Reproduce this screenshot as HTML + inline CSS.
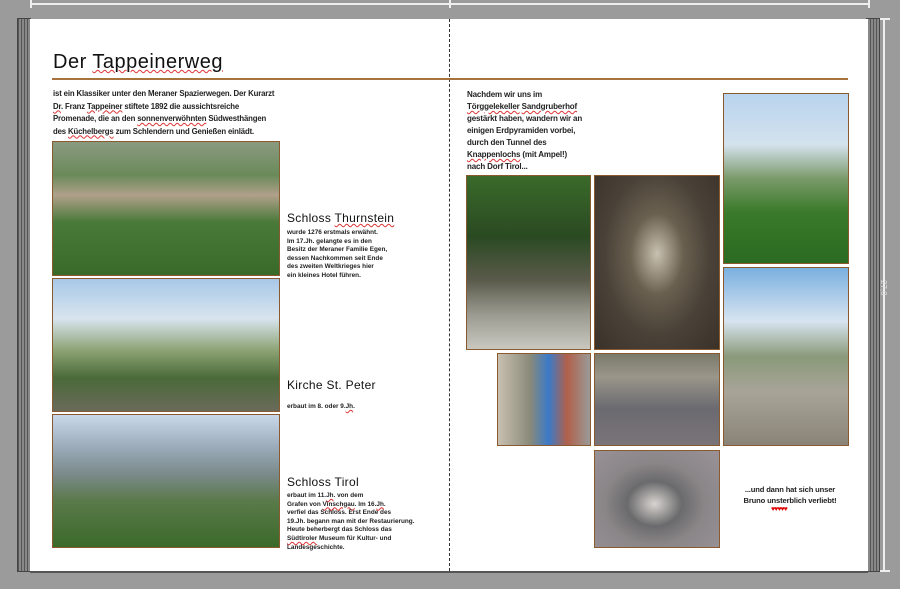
<!DOCTYPE html>
<html><head><meta charset="utf-8"><style>
*{margin:0;padding:0;box-sizing:border-box}
body{width:900px;height:589px;background:#9b9b9b;position:relative;overflow:hidden;font-family:"Liberation Sans",sans-serif}
.a{position:absolute}
.page{left:30px;top:19px;width:838px;height:552px;background:#fff}
.ph{position:absolute;border:1.5px solid #8a5a2e}
.t{position:absolute;font-size:7.8px;line-height:12.5px;color:#222;font-weight:bold;letter-spacing:-0.15px}
.s{position:absolute;font-size:6.4px;line-height:8.6px;color:#222;font-weight:bold}
.h{position:absolute;font-size:12px;color:#111;font-family:"Liberation Sans",sans-serif;font-weight:300;letter-spacing:0.3px}
u{text-decoration:underline wavy #d33;text-decoration-thickness:1px}
</style></head><body>
<div class="a" style="left:30px;top:3px;width:840px;height:2px;background:#eee"></div>
<div class="a" style="left:30px;top:0;width:2px;height:8px;background:#eee"></div>
<div class="a" style="left:449px;top:0;width:2px;height:8px;background:#eee"></div>
<div class="a" style="left:868px;top:0;width:2px;height:8px;background:#eee"></div>
<div class="a" style="left:883px;top:19px;width:2px;height:552px;background:#eee"></div>
<div class="a" style="left:878px;top:18px;width:12px;height:2px;background:#eee"></div>
<div class="a" style="left:878px;top:570px;width:12px;height:2px;background:#eee"></div>
<div class="a" style="left:888px;top:280px;font-size:8px;color:#ddd;transform:rotate(90deg);transform-origin:0 0">27,0 cm</div>
<div class="a" style="left:17px;top:18px;width:14px;height:554px;background:repeating-linear-gradient(90deg,#555 0 1px,#888 1px 3px);border:1px solid #444"></div>
<div class="a" style="left:866px;top:18px;width:14px;height:554px;background:repeating-linear-gradient(90deg,#555 0 1px,#888 1px 3px);border:1px solid #444"></div>
<div class="a page"></div>
<div class="a" style="left:449px;top:19px;height:552px;border-left:1px dashed #333"></div>
<div class="a" style="left:30px;top:571px;width:838px;height:2px;background:#555"></div>
<div class="a" style="left:53px;top:51px;font-size:20px;color:#111;letter-spacing:0.5px">Der <u>Tappeinerweg</u></div>
<div class="a" style="left:52px;top:78px;width:796px;height:2px;background:#a8723e"></div>
<div class="t" style="left:53px;top:88px;width:240px">ist ein Klassiker unter den Meraner Spazierwegen. Der Kurarzt<br><u>Dr</u>. Franz <u>Tappeiner</u> stiftete 1892 die aussichtsreiche<br>Promenade, die an den <u>sonnenverwöhnten</u> Südwesthängen<br>des <u>Küchelbergs</u> zum Schlendern und Genießen einlädt.</div>
<div class="ph" style="left:52px;top:141px;width:228px;height:135px;background:linear-gradient(180deg,#8a9a80 0%,#6a8a5a 25%,#b0a08a 40%,#4a7a3a 60%,#3a6a2a 100%)"></div>
<div class="ph" style="left:52px;top:278px;width:228px;height:134px;background:linear-gradient(180deg,#a8c8e8 0%,#d8e4ee 30%,#8aa070 55%,#4a6a3a 75%,#6a6a5a 100%)"></div>
<div class="ph" style="left:52px;top:414px;width:228px;height:134px;background:linear-gradient(180deg,#c8d8ea 0%,#9aaab8 25%,#7a8a8a 45%,#5a7a4a 65%,#3a6a2a 100%)"></div>
<div class="h" style="left:287px;top:211px;font-size:12px">Schloss <u>Thurnstein</u></div>
<div class="s" style="left:287px;top:229px;width:150px">wurde 1276 erstmals erwähnt.<br>Im 17.Jh. gelangte es in den<br>Besitz der Meraner Familie Egen,<br>dessen Nachkommen seit Ende<br>des zweiten Weltkrieges hier<br>ein kleines Hotel führen.</div>
<div class="h" style="left:287px;top:378px">Kirche St. Peter</div>
<div class="s" style="left:287px;top:403px">erbaut im 8. oder 9.<u>Jh</u>.</div>
<div class="h" style="left:287px;top:475px">Schloss Tirol</div>
<div class="s" style="left:287px;top:492px;width:150px">erbaut im 11.<u>Jh</u>. von dem<br>Grafen von <u>Vinschgau</u>. Im 16.<u>Jh</u>.<br>verfiel das Schloss. Erst Ende des<br>19.Jh. begann man mit der Restaurierung.<br>Heute beherbergt das Schloss das<br><u>Südtiroler</u> Museum für Kultur- und<br>Landesgeschichte.</div>
<div class="t" style="left:467px;top:89px;width:130px;line-height:12px;font-size:8px">Nachdem wir uns im<br><u>Törggelekeller</u> <u>Sandgruberhof</u><br>gestärkt haben, wandern wir an<br>einigen Erdpyramiden vorbei,<br>durch den Tunnel des<br><u>Knappenlochs</u> (mit Ampel!)<br>nach Dorf Tirol...</div>
<div class="ph" style="left:723px;top:93px;width:126px;height:171px;background:linear-gradient(180deg,#b8d4ee 0%,#d4e2ee 30%,#7a9a6a 50%,#3a7a2a 70%,#2a6a22 100%)"></div>
<div class="ph" style="left:466px;top:175px;width:125px;height:175px;background:linear-gradient(180deg,#3a6a2a 0%,#2a4a22 35%,#5a5a4a 60%,#9a9a90 80%,#c8c8c0 100%)"></div>
<div class="ph" style="left:594px;top:175px;width:126px;height:175px;background:radial-gradient(ellipse at 50% 45%,#c8c0b0 0%,#6a6050 30%,#4a4238 60%,#3a3228 100%)"></div>
<div class="ph" style="left:723px;top:267px;width:126px;height:179px;background:linear-gradient(180deg,#7ab0e0 0%,#d8e4f0 30%,#8a9a7a 50%,#a8a498 70%,#8a8478 100%)"></div>
<div class="ph" style="left:497px;top:353px;width:94px;height:93px;background:linear-gradient(90deg,#c8c0b0 0%,#8a8a7a 35%,#3a7ac8 55%,#b0604a 75%,#9a9a98 100%)"></div>
<div class="ph" style="left:594px;top:353px;width:126px;height:93px;background:linear-gradient(180deg,#7a7a6a 0%,#9a968a 25%,#6a6a70 60%,#7a7478 100%)"></div>
<div class="ph" style="left:594px;top:450px;width:126px;height:98px;background:radial-gradient(ellipse at 48% 55%,#d8d4d0 0%,#6a6a6c 30%,#8a8688 55%,#9a9298 100%)"></div>
<div class="t" style="left:735px;top:484px;width:110px;text-align:center;font-size:7.6px;line-height:11px">...und dann hat sich unser Bruno unsterblich verliebt!</div>
<div class="a" style="left:771px;top:506px;font-size:7px;color:#d00;letter-spacing:-1px">♥♥♥♥♥</div>
</body></html>
